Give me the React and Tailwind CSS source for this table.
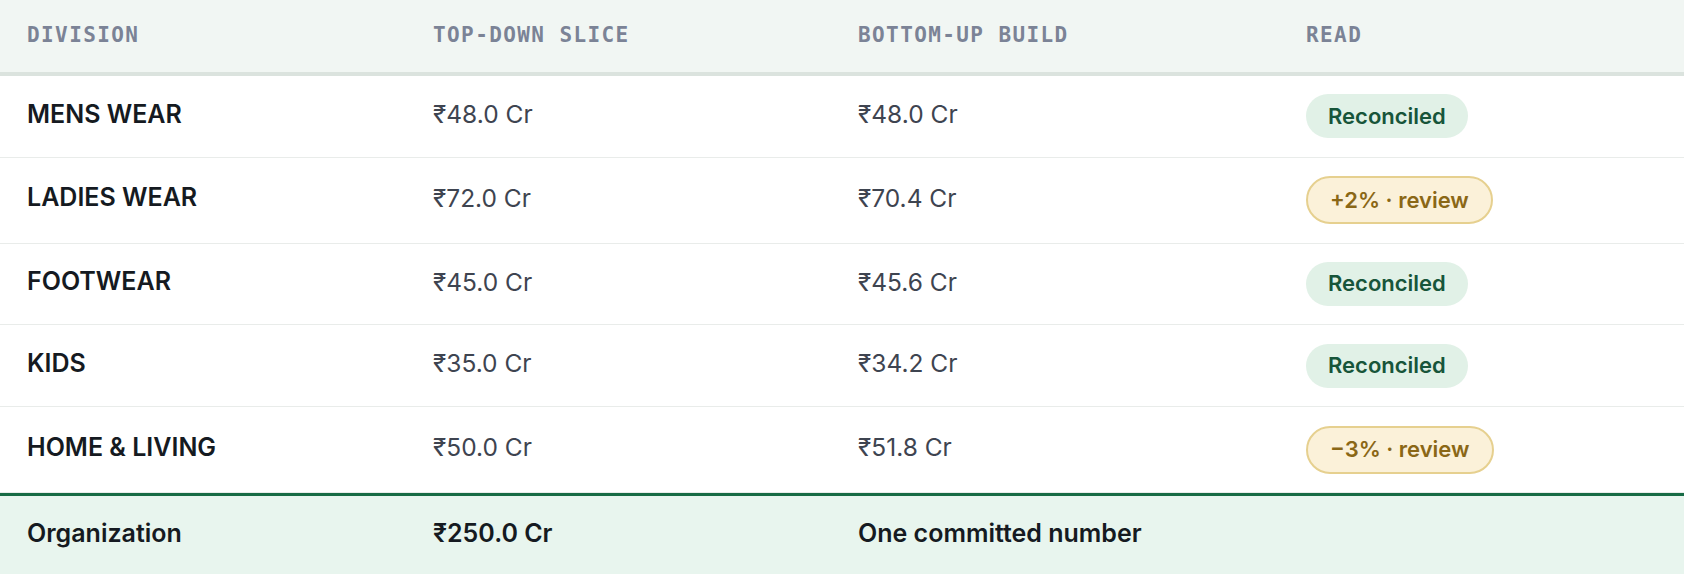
import React from "react";

const rows = [
  { name: "MENS WEAR", top: "₹48.0 Cr", bottom: "₹48.0 Cr", read: "ok", label: "Reconciled" },
  { name: "LADIES WEAR", top: "₹72.0 Cr", bottom: "₹70.4 Cr", read: "warn", label: "+2% · review" },
  { name: "FOOTWEAR", top: "₹45.0 Cr", bottom: "₹45.6 Cr", read: "ok", label: "Reconciled" },
  { name: "KIDS", top: "₹35.0 Cr", bottom: "₹34.2 Cr", read: "ok", label: "Reconciled" },
  { name: "HOME & LIVING", top: "₹50.0 Cr", bottom: "₹51.8 Cr", read: "warn", label: "−3% · review" },
];

const cols = "grid grid-cols-[406px_425px_448px_1fr]";

const Badge = ({ read, label }) =>
  read === "ok" ? (
    <span className="inline-flex items-center h-[44px] px-[22px] rounded-full bg-[#e1f1e7] text-[#17553a] text-[22px] font-semibold">
      {label}
    </span>
  ) : (
    <span className="inline-flex items-center h-[48px] px-[22px] rounded-full border-2 border-[#e6d08f] bg-[#fbf1d9] text-[#8a6716] text-[22px] font-semibold">
      {label}
    </span>
  );

export default function App() {
  return (
    <div className="w-[1684px] h-[574px] flex flex-col bg-white font-['Inter','Noto_Sans',sans-serif] overflow-hidden">
      {/* header */}
      <div className={`${cols} h-[76px] shrink-0 bg-[#f1f6f3] border-b-4 border-[#dbe3de] font-['DejaVu_Sans_Mono',monospace] text-[21px] font-semibold tracking-[1.4px] text-[#7b8396] uppercase`}>
        <div className="px-[27px] flex items-center">Division</div>
        <div className="px-[27px] flex items-center">Top-down slice</div>
        <div className="px-[27px] flex items-center">Bottom-up build</div>
        <div className="px-[27px] flex items-center">Read</div>
      </div>

      {rows.map((r) => (
        <div key={r.name} className={`${cols} shrink-0 border-b border-[#e9ecea]`}>
          <div className="px-[27px] pt-[16px] pb-[20px] flex items-center text-[25px] font-semibold text-[#151a21]">
            {r.name}
          </div>
          <div className="px-[27px] pt-[16px] pb-[20px] flex items-center text-[24.5px] text-[#3e4450]">
            {r.top}
          </div>
          <div className="px-[27px] pt-[16px] pb-[20px] flex items-center text-[24.5px] text-[#3e4450]">
            {r.bottom}
          </div>
          <div className="px-[27px] py-[18.4px] flex items-center">
            <Badge read={r.read} label={r.label} />
          </div>
        </div>
      ))}

      {/* footer total */}
      <div className={`${cols} flex-1 bg-[#e8f5ee] border-t-[3px] border-[#176b45] text-[25px] font-semibold text-[#151a21]`}>
        <div className="px-[27px] pt-[19px] leading-[36px]">Organization</div>
        <div className="px-[27px] pt-[19px] leading-[36px]">₹250.0 Cr</div>
        <div className="px-[27px] pt-[19px] leading-[36px]">One committed number</div>
        <div className="px-[27px] pt-[19px] leading-[36px]"></div>
      </div>
    </div>
  );
}
